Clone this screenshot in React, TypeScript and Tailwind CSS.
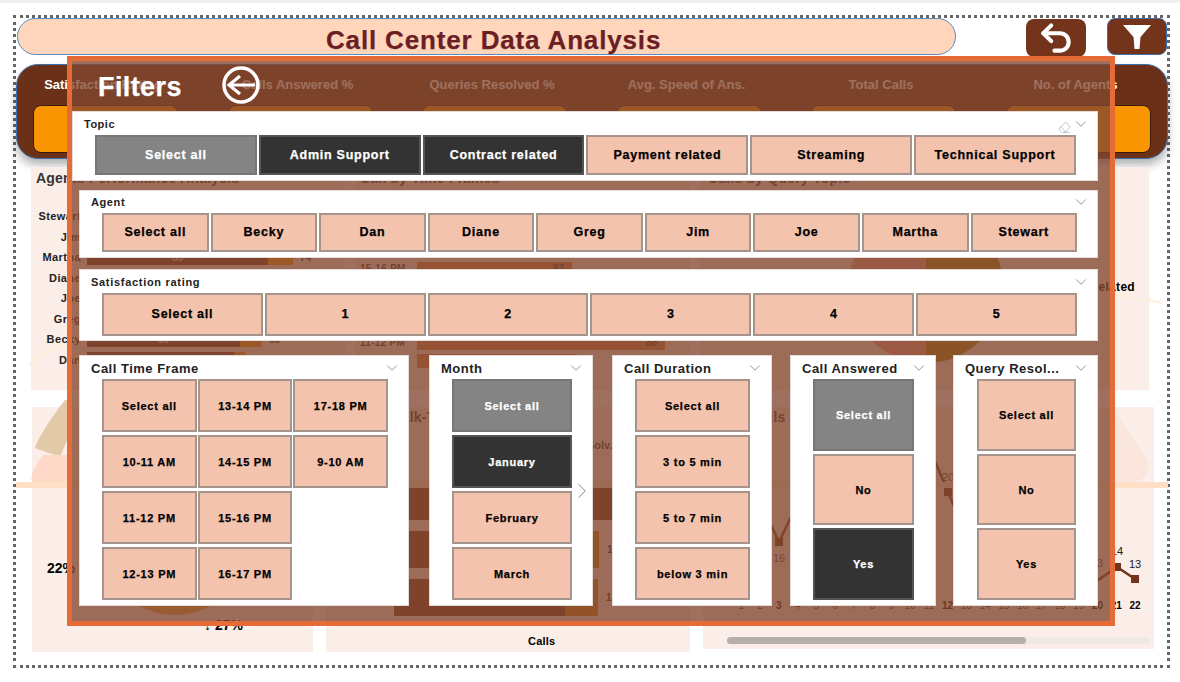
import { ChevronDown, ChevronRight, Eraser, Undo2 } from 'lucide-react'
import type { ReactNode } from 'react'

type TileState = 'idle' | 'all' | 'on'

const kpis = ['Satisfaction Rating', 'Calls Answered %', 'Queries Resolved %', 'Avg. Speed of Ans.', 'Total Calls', 'No. of Agents']

const agentBars = [
  { name: 'Stewart', main: 190, extra: 20, total: 72, sub: 63 },
  { name: 'Jim', main: 186, extra: 22, total: 71, sub: 62 },
  { name: 'Martha', main: 181, extra: 25, total: 74, sub: 65 },
  { name: 'Diane', main: 172, extra: 24, total: 70, sub: 61 },
  { name: 'Joe', main: 168, extra: 24, total: 69, sub: 60 },
  { name: 'Greg', main: 160, extra: 23, total: 68, sub: 59 },
  { name: 'Becky', main: 153, extra: 22, total: 65, sub: 59 },
  { name: 'Dan', main: 147, extra: 11, total: 63, sub: 57 },
]

const timeBars = [
  { label: '13-14 PM', width: 240, value: 92 },
  { label: '14-15 PM', width: 230, value: 91 },
  { label: '10-11 AM', width: 220, value: 90 },
  { label: '15-16 PM', width: 155, value: 87 },
  { label: '12-13 PM', width: 200, value: 89 },
  { label: '9-10 AM', width: 190, value: 87 },
  { label: '17-18 PM', width: 210, value: 88 },
  { label: '11-12 PM', width: 248, value: 88 },
  { label: '16-17 PM', width: 160, value: 86 },
]

const durationBars = [
  { main: 246, extra: 30, total: 172 },
  { main: 196, extra: 9, total: 148 },
  { main: 171, extra: 33, total: 137 },
]

const days = Array.from({ length: 22 }, (_, i) => i + 1)
const boldDays = [3, 12, 20, 21, 22]

const heavy = '[-webkit-text-stroke:0.25px]'

function Tile({ label, state = 'idle', size = 'text-[11px] tracking-[0.75px] pt-px' }: { label: string; state?: TileState; size?: string }) {
  const tone =
    state === 'all'
      ? 'bg-[#848484] border-[#777777] text-white'
      : state === 'on'
        ? 'bg-[#333333] border-[#555555] text-white'
        : 'bg-[#f4c3ad] border-[#a4948b] text-black'
  return (
    <div className={`flex min-h-0 min-w-0 flex-1 items-center justify-center border-2 font-bold ${heavy} ${size} ${tone}`}>
      {label}
    </div>
  )
}

function Slicer({
  title,
  className,
  titleClass = 'top-[5px] text-[13px] tracking-[0.5px]',
  chevronClass = 'top-[3px]',
  children,
}: {
  title: string
  className: string
  titleClass?: string
  chevronClass?: string
  children: ReactNode
}) {
  return (
    <div className={`relative flex flex-col border border-[#e3dcd8] bg-white ${className}`}>
      <span className={`absolute left-[11px] font-bold leading-4 text-[#222222] ${titleClass}`}>{title}</span>
      <ChevronDown className={`absolute right-[7px] h-[18px] w-[18px] text-[#667788] ${chevronClass}`} strokeWidth={1} />
      {children}
    </div>
  )
}

function TileRow({ labels, selected = {} }: { labels: string[]; selected?: Record<string, TileState> }) {
  return (
    <div className="flex h-full gap-[2px]">
      {labels.map((label) => (
        <Tile key={label} label={label} size="text-[12.5px] tracking-[0.75px]" state={selected[label] ?? 'idle'} />
      ))}
    </div>
  )
}

function TileColumn({ labels, selected = {} }: { labels: string[]; selected?: Record<string, TileState> }) {
  return (
    <div className="flex h-full flex-col gap-[3px]">
      {labels.map((label) => (
        <Tile key={label} label={label} state={selected[label] ?? 'idle'} />
      ))}
    </div>
  )
}

function FilterPane() {
  return (
    <div className="absolute left-[51px] top-[38px] z-20 flex h-[570px] w-[1048px] flex-col border-[5px] border-[#e56b39] bg-[#834830]/78">
      <div className="flex h-[50px] shrink-0 items-start">
        <span className={`ml-[26px] mt-[10px] w-[124px] text-[27px] font-bold leading-8 tracking-[0.4px] text-white ${heavy}`}>Filters</span>
        <svg className="mt-[5px]" width="38" height="38" viewBox="0 0 38 38" fill="none" stroke="white">
          <circle cx="19" cy="19" r="17" strokeWidth="3.5" />
          <path d="M18 10 L7 19 L18 28 M7 19 H33" strokeWidth="3.2" />
        </svg>
      </div>

      <Slicer
        title="Topic"
        titleClass="top-[4px] text-[11px] tracking-[0.5px]"
        chevronClass="top-[3px]"
        className="h-[70px] w-[1026px] shrink-0 pb-[5px] pl-[22px] pr-[21px] pt-[23px]"
      >
        <Eraser className="absolute right-[26px] top-[9px] h-[13px] w-[13px] text-[#8090a0]" strokeWidth={1} />
        <TileRow
          labels={['Select all', 'Admin Support', 'Contract related', 'Payment related', 'Streaming', 'Technical Support']}
          selected={{ 'Select all': 'all', 'Admin Support': 'on', 'Contract related': 'on' }}
        />
      </Slicer>

      <Slicer
        title="Agent"
        titleClass="top-[3px] text-[11px] tracking-[0.6px]"
        chevronClass="top-[2px]"
        className="ml-[7px] mt-[9px] h-[68px] w-[1019px] shrink-0 pb-[5px] pl-[22px] pr-[20px] pt-[22px]"
      >
        <TileRow labels={['Select all', 'Becky', 'Dan', 'Diane', 'Greg', 'Jim', 'Joe', 'Martha', 'Stewart']} />
      </Slicer>

      <Slicer
        title="Satisfaction rating"
        titleClass="top-[4px] text-[11px] tracking-[0.7px]"
        chevronClass="top-[3px]"
        className="ml-[7px] mt-[11px] h-[72px] w-[1019px] shrink-0 pb-[4px] pl-[22px] pr-[20px] pt-[23px]"
      >
        <TileRow labels={['Select all', '1', '2', '3', '4', '5']} />
      </Slicer>

      <div className="ml-[7px] mt-[14px] flex h-[251px] w-[1019px] shrink-0">
        <Slicer title="Call Time Frame" className="h-full w-[330px] pb-[5px] pl-[22px] pr-[20px] pt-[23px]">
          <div className="grid h-full grid-flow-col grid-cols-3 grid-rows-4 gap-x-[1px] gap-y-[3px]">
            {['Select all', '10-11 AM', '11-12 PM', '12-13 PM', '13-14 PM', '14-15 PM', '15-16 PM', '16-17 PM', '17-18 PM', '9-10 AM'].map((label) => (
              <Tile key={label} label={label} />
            ))}
          </div>
        </Slicer>

        <Slicer title="Month" className="ml-[20px] h-full w-[164px] pb-[5px] pl-[22px] pr-[20px] pt-[23px]">
          <TileColumn labels={['Select all', 'January', 'February', 'March']} selected={{ 'Select all': 'all', January: 'on' }} />
          <ChevronRight className="absolute -right-[3px] top-[122px] h-[26px] w-[26px] text-[#667788]" strokeWidth={0.8} />
        </Slicer>

        <Slicer title="Call Duration" className="ml-[19px] h-full w-[160px] pb-[5px] pl-[22px] pr-[21px] pt-[23px]">
          <TileColumn labels={['Select all', '3 to 5 min', '5 to 7 min', 'below 3 min']} />
        </Slicer>

        <Slicer title="Call Answered" className="ml-[18px] h-full w-[146px] pb-[5px] pl-[22px] pr-[21px] pt-[23px]">
          <TileColumn labels={['Select all', 'No', 'Yes']} selected={{ 'Select all': 'all', Yes: 'on' }} />
        </Slicer>

        <Slicer title="Query Resol..." className="ml-[17px] h-full w-[145px] pb-[5px] pl-[23px] pr-[21px] pt-[23px]">
          <TileColumn labels={['Select all', 'No', 'Yes']} />
        </Slicer>
      </div>
    </div>
  )
}

function AgentChart() {
  return (
    <div className="h-full w-[314px] bg-[#fbede8] pl-[5px] pt-[3px]">
      <h3 className="text-[14px] font-bold leading-4 tracking-[0.2px] text-[#333333]">Agents Performance Analysis</h3>
      <div className="ml-[1px] mt-[20px] flex flex-col">
        {agentBars.map((row) => (
          <div key={row.name} className="flex h-[20.5px] items-center">
            <span className="w-[44px] text-right text-[11px] font-bold tracking-[0.4px] text-[#222222]">{row.name}</span>
            <div className="ml-[6px] flex h-[15px] items-center">
              <div className="flex h-full items-center justify-center bg-[#74341c] text-[10px] text-white" style={{ width: row.main }}>{row.sub}</div>
              <div className="h-full bg-[#f99500]" style={{ width: row.extra }} />
              <span className="ml-[7px] text-[10px] font-bold text-[#222222]">{row.total}</span>
            </div>
          </div>
        ))}
      </div>
    </div>
  )
}

function TimeChart() {
  return (
    <div className="ml-[10px] h-full w-[335px] bg-[#fbede8] pl-[5px] pt-[3px]">
      <h3 className="text-[14px] font-bold leading-4 tracking-[0.2px] text-[#333333]">Call by Time Frames</h3>
      <div className="mt-[18px] flex flex-col">
        {timeBars.map((row) => (
          <div key={row.label} className="flex h-[18.5px] items-center">
            <span className="w-[57px] text-[10px] font-bold tracking-[0.3px] text-[#333333]">{row.label}</span>
            <div className="flex h-[14px] items-center justify-end bg-[#d97a45] pr-[8px] text-[10px] font-bold text-[#333333]" style={{ width: row.width }}>
              {row.value}
            </div>
          </div>
        ))}
      </div>
    </div>
  )
}

function TopicChart() {
  return (
    <div className="relative ml-[10px] h-full w-[449px] bg-[#fbede8] pl-[8px] pt-[3px]">
      <h3 className="text-[14px] font-bold leading-4 tracking-[0.2px] text-[#333333]">Calls by Query Topic</h3>
      <svg className="absolute left-[148px] top-[41px]" width="156" height="156" viewBox="0 0 156 156">
        <path d="M78 78 L78 1 A77 77 0 0 1 78 155 Z" fill="#a87e0a" />
        <path d="M78 78 L78 155 A77 77 0 0 1 78 1 Z" fill="#ec9a8c" />
      </svg>
      <span className="absolute right-[14px] top-[111px] whitespace-nowrap text-[12px] font-bold tracking-[0.3px] text-black">Payment related</span>
    </div>
  )
}

function RatingChart() {
  return (
    <div className="relative h-full w-[281px] bg-[#fbede8]">
      <svg className="absolute left-[68px] top-[60px]" width="150" height="150" viewBox="0 0 150 150">
        <circle cx="75" cy="75" r="60" fill="none" stroke="#e9a23c" strokeWidth="26" />
      </svg>
      <span className="absolute left-[15px] top-[151px] text-[14px] font-bold text-black">22%</span>
      <span className="absolute left-[172px] top-[208px] text-[14px] font-bold text-black">↓ 27%</span>
    </div>
  )
}

function DurationChart() {
  return (
    <div className="relative ml-[13px] flex h-full w-[364px] flex-col bg-[#fbede8] pl-[68px]">
      <h3 className="mt-[2px] text-[14px] font-bold leading-4 tracking-[0.2px] text-[#333333]">Talk-Time</h3>
      <span className="absolute left-[261px] top-[30px] w-[26px] text-[11px] font-bold text-[#333333]">Solv...</span>
      <div className="mt-[58px] flex flex-col gap-[11px]">
        {durationBars.map((bar) => (
          <div key={bar.total} className="flex h-[37px] items-center">
            <div className="h-full bg-[#74341c]" style={{ width: bar.main }} />
            <div className="h-full bg-[#c87a14]" style={{ width: bar.extra }} />
            <span className="ml-[8px] text-[10px] font-bold text-[#222222]">{bar.total}</span>
          </div>
        ))}
      </div>
      <span className="absolute left-[202px] top-[226px] text-[11px] font-bold tracking-[0.2px] text-black">Calls</span>
    </div>
  )
}

function DayChart() {
  return (
    <div className="ml-[13px] flex h-[242px] w-[451px] flex-col bg-[#fbede8]">
      <h3 className="ml-[48px] mt-[2px] h-[18px] text-[14px] font-bold leading-4 tracking-[0.2px] text-[#333333]">Calls by Day</h3>
      <svg className="shrink-0" width="451" height="170" viewBox="0 0 451 170">
        <polyline points="57,75 76,115 95,75 226,20 245,65 264,110 395,153 414,140 432,152" fill="none" stroke="#74341c" strokeWidth="2.5" />
        <rect x="72" y="111" width="8" height="8" fill="#74341c" />
        <rect x="241" y="61" width="8" height="8" fill="#74341c" />
        <rect x="410" y="136" width="8" height="8" fill="#74341c" />
        <rect x="428" y="148" width="8" height="8" fill="#74341c" />
        <text x="76" y="135" textAnchor="middle" fontSize="11" fill="#444444">16</text>
        <text x="245" y="54" textAnchor="middle" fontSize="11" fill="#444444">20</text>
        <text x="388" y="140" fontSize="11" fill="#444444">13</text>
        <text x="408" y="128" fontSize="11" fill="#222222">14</text>
        <text x="432" y="141" textAnchor="middle" fontSize="11" fill="#222222">13</text>
      </svg>
      <div className="ml-[29px] flex h-[16px] shrink-0 items-center">
        {days.map((day) => (
          <span key={day} className={`w-[18.75px] text-center text-[10px] ${boldDays.includes(day) ? 'font-bold text-black' : 'text-[#333333]'}`}>
            {day}
          </span>
        ))}
      </div>
      <div className="ml-[24px] mr-[4px] mt-[24px] h-[7px] rounded-full bg-[#f0e8e4]">
        <div className="h-full w-[299px] rounded-full bg-[#b5aeaa]" />
      </div>
    </div>
  )
}

export default function App() {
  return (
    <div className="h-[682px] w-[1180px] overflow-hidden bg-white font-['Liberation_Sans',Arial,sans-serif]">
      <div className="h-[3px] bg-[#f0f0f0]" />
      <div className="relative ml-[13px] mt-[12px] h-[653px] w-[1157px] border-[3px] border-dotted border-[#666666]">
        <div className="flex h-[37px] items-start">
          <div className="ml-px flex h-[37px] w-[941px] items-center justify-center rounded-[20px] border border-[#5b8bc0] bg-[#ffd5bc] pl-[14px] pt-[7px]">
            <h1 className={`text-[26px] font-bold tracking-[0.85px] text-[#6b1f24] ${heavy}`}>Call Center Data Analysis</h1>
          </div>
          <div className="ml-[70px] mt-px flex h-[38px] w-[60px] items-center justify-center rounded-lg bg-[#74341c]">
            <Undo2 className="h-[38px] w-[38px] text-white" strokeWidth={2.6} />
          </div>
          <div className="ml-[21px] flex h-[37px] w-[60px] items-center justify-center rounded-lg border border-[#3f6fa8] bg-[#74341c]">
            <svg width="30" height="26" viewBox="0 0 30 26">
              <path d="M1 1 H29 L18.5 13 L17.5 25 H12.5 L11.5 13 Z" fill="white" />
            </svg>
          </div>
        </div>

        <div className="mt-[9px] h-[95px] w-[1152px] rounded-[22px] border border-[#3f6fa8] bg-[#6b3018] px-[16px] pt-[10px] shadow-[0_6px_10px_rgba(0,0,0,0.3)]">
          <div className="grid grid-cols-6 gap-x-[49px]">
            {kpis.map((label) => (
              <div key={label} className="flex w-[145px] flex-col items-center">
                <span className="mr-[5px] h-[30px] whitespace-nowrap text-[13px] font-bold leading-5 text-white">{label}</span>
                <div className="h-[48px] w-full rounded-lg border border-[#3a1a08] bg-[#f99500]" />
              </div>
            ))}
          </div>
        </div>

        <div className="ml-[15px] mt-[8px] flex h-[223px]">
          <AgentChart />
          <TimeChart />
          <TopicChart />
        </div>

        <div className="ml-[16px] mt-[17px] flex h-[245px]">
          <RatingChart />
          <DurationChart />
          <DayChart />
        </div>

        {/* background artwork that sits over the report, under the filter pane */}
        <svg className="pointer-events-none absolute left-0 top-0 z-10" width="1152" height="647" viewBox="0 0 1152 647">
          <path d="M49 382 C35 400 22 420 19 430 L44 439 L52 420 L52 382 Z" fill="#e2c9a8" />
          <path d="M27 437 C18 450 14 458 16 464 L52 464 L52 437 Z" fill="#ffd9c8" />
          <path d="M14 347 C24 338 34 332 46 328" fill="none" stroke="#fdf0dc" strokeWidth="3" />
          <path d="M1100 395 L1130 440 C1136 452 1130 460 1120 464 L1100 464 Z" fill="#fbe6dd" />
          <rect x="0" y="464" width="1152" height="6" fill="#ffdfc6" />
          <path d="M1096 275 C1115 279 1130 281 1146 285" fill="none" stroke="#fdf0dc" strokeWidth="2" />
        </svg>

        <FilterPane />
      </div>
    </div>
  )
}
